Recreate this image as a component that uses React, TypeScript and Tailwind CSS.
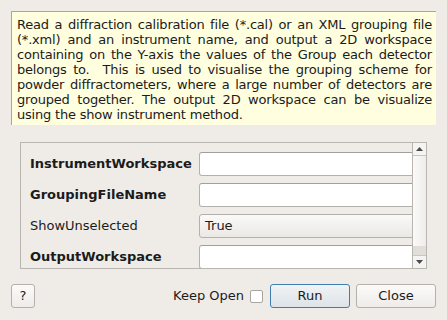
const font = { fontFamily: '"DejaVu Sans", sans-serif' };

const params = [
  { name: "InstrumentWorkspace", bold: true, kind: "text", value: "" },
  { name: "GroupingFileName", bold: true, kind: "text", value: "" },
  { name: "ShowUnselected", bold: false, kind: "combo", value: "True" },
  { name: "OutputWorkspace", bold: true, kind: "text", value: "" },
];

function Arrow({ up }: { up?: boolean }) {
  return (
    <svg width="7" height="4" viewBox="0 0 7 4" className="block">
      <polygon points={up ? "0,4 7,4 3.5,0" : "0,0 7,0 3.5,4"} fill="#4a4a4a" />
    </svg>
  );
}

export default function App() {
  return (
    <div
      className="w-[447px] h-[320px] bg-[#efebe7] text-[#1b1b1b] overflow-hidden flex flex-col"
      style={font}
    >
      <div className="ml-[11px] mt-[11px] w-[425px] h-[114px] bg-[#ffffe0] border-l border-t border-[#a9a5a1] pl-[5px] pr-[4px] pt-[5px] text-[13px] leading-[15px] tracking-[-0.2px] text-justify">
        Read a diffraction calibration file (*.cal) or an XML grouping file
        (*.xml) and an instrument name, and output a 2D workspace containing
        on the Y-axis the values of the Group each detector belongs to.&nbsp;
        This is used to visualise the grouping scheme for powder
        diffractometers, where a large number of detectors are grouped
        together. The output 2D workspace can be visualize using the show
        instrument method.
      </div>

      <div className="ml-[20px] mt-[17px] w-[407px] h-[127px] border border-[#b9b5b1] flex">
        <div className="flex-1 overflow-hidden pt-[9px] flex flex-col gap-[7px]">
          {params.map((p) => (
            <div key={p.name} className="flex items-center h-[24px] shrink-0">
              <div
                className={`w-[178px] shrink-0 pl-[9px] text-[13px] whitespace-nowrap ${
                  p.bold ? "font-bold" : ""
                }`}
              >
                {p.name}
              </div>
              {p.kind === "combo" ? (
                <div className="w-[220px] shrink-0 h-[24px] rounded-[3px] border border-[#b4b0ab] bg-gradient-to-b from-[#fbfaf9] to-[#ebe8e5] text-[13px] flex items-center pl-[5px]">
                  {p.value}
                </div>
              ) : (
                <div className="w-[220px] shrink-0 h-[24px] rounded-[3px] border border-[#b4b0ab] border-t-[#a39f9a] bg-white" />
              )}
            </div>
          ))}
        </div>
        <div className="w-[14px] shrink-0 border-l border-[#b9b5b1] flex flex-col">
          <div className="h-[13px] bg-[#f5f4f2] flex items-center justify-center border-b border-[#c9c5c1]">
            <Arrow up />
          </div>
          <div className="h-[90px] bg-gradient-to-r from-[#fbfaf9] to-[#efedea]" />
          <div className="flex-1 bg-[#e1ded9] border-b border-[#c9c5c1]" />
          <div className="h-[12px] bg-[#f5f4f2] flex items-center justify-center">
            <Arrow />
          </div>
        </div>
      </div>

      <div className="mt-[15px] flex items-center px-[11px] h-[24px]">
        <button className="w-[24px] h-[24px] rounded-[3px] border border-[#b4b0ab] bg-gradient-to-b from-[#fcfbfa] to-[#eeebe8] text-[13px] flex items-center justify-center">
          ?
        </button>
        <div className="flex-1" />
        <span className="text-[13px] mr-[6px]">Keep Open</span>
        <div className="w-[13px] h-[13px] bg-white border border-[#a9a5a1] rounded-[2px] mr-[7px]" />
        <button className="w-[80px] h-[24px] rounded-[3px] border border-[#3f7fb0] bg-gradient-to-b from-[#f1f3f5] to-[#dde3e8] text-[13px] flex items-center justify-center mr-[6px]">
          Run
        </button>
        <button className="w-[80px] h-[24px] rounded-[3px] border border-[#b4b0ab] bg-gradient-to-b from-[#fcfbfa] to-[#eeebe8] text-[13px] flex items-center justify-center">
          Close
        </button>
      </div>
    </div>
  );
}
